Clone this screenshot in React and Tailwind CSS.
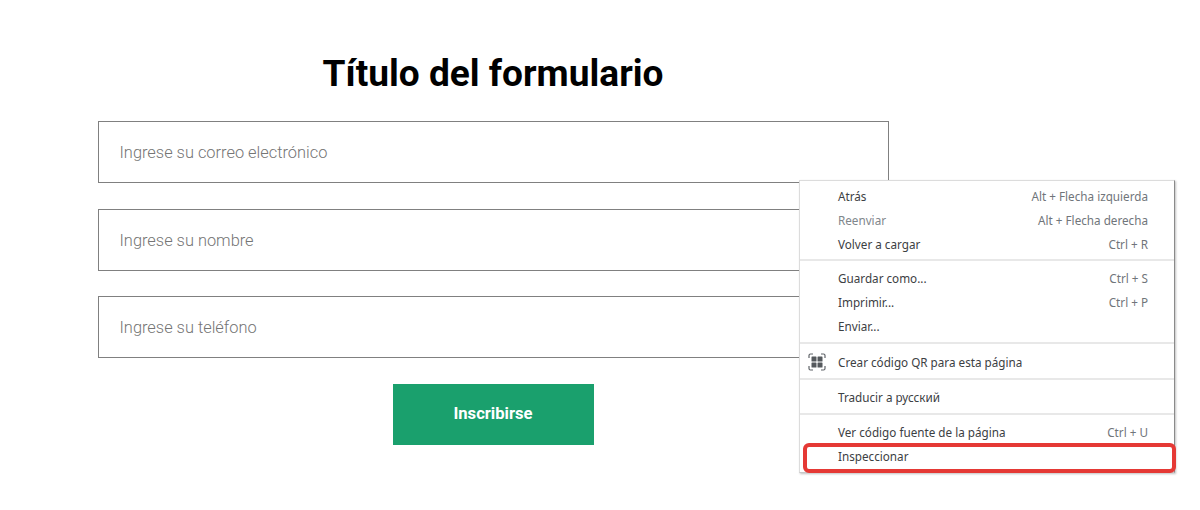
function Field({ label, className = "" }) {
  return (
    <div className={`flex h-[62px] w-[791px] items-center border border-[#808080] bg-white pl-[21px] font-['Roboto',sans-serif] text-[16.4px] font-light text-[#757575] ${className}`}>
      <span className="translate-y-[1px]">{label}</span>
    </div>
  );
}

function Row({ label, hint, muted, icon }) {
  return (
    <div className={`relative flex h-6 items-center justify-between pl-[38px] pr-[26px] ${muted ? "text-[#80868b]" : "text-[#3c4043]"}`}>
      {icon && <div className="absolute left-[8px] top-[2px]">{icon}</div>}
      <span>{label}</span>
      {hint && <span className="text-[#70757a]">{hint}</span>}
    </div>
  );
}

function Sep({ className }) {
  return <div className={`h-[2px] bg-[#e8e8e8] ${className}`} />;
}

function QrIcon() {
  return (
    <svg width="18" height="18" viewBox="0 0 18 18" fill="none">
      <path d="M1 5V2.5A1.500 1.500 0 0 1 2.500 1H5M13 1h2.500A1.500 1.500 0 0 1 17 2.500V5M17 13v2.500a1.500 1.500 0 0 1-1.500 1.500H13M5 17H2.500A1.500 1.500 0 0 1 1 15.500V13" stroke="#5f6368" strokeWidth="1.200" />
      <rect x="3.500" y="3.500" width="5" height="5" rx="0.600" fill="#55595d" />
      <rect x="9.500" y="3.500" width="5" height="5" rx="0.600" fill="#55595d" />
      <rect x="3.500" y="9.500" width="5" height="5" rx="0.600" fill="#55595d" />
      <rect x="9.500" y="9.500" width="5" height="5" rx="0.600" fill="#55595d" />
    </svg>
  );
}

export default function App() {
  return (
    <div className="relative h-[510px] w-[1200px] overflow-hidden bg-white">
      <div className="flex w-[986px] flex-col items-center pt-[50px]">
        <h1 className="mb-[24px] h-[47px] font-['Roboto',sans-serif] text-[37.1px] font-bold leading-[47px] text-black">
          Título del formulario
        </h1>
        <div className="flex flex-col">
          <Field label="Ingrese su correo electrónico" />
          <Field label="Ingrese su nombre" className="mt-[26px]" />
          <Field label="Ingrese su teléfono" className="mt-[25px]" />
        </div>
        <button className="mt-[26px] flex h-[61px] w-[201px] items-center justify-center bg-[#1aa06d] font-['Roboto',sans-serif] text-[16.6px] font-bold text-white">
          Inscribirse
        </button>
      </div>

      <div className="absolute left-[799px] top-[180px] h-[293px] w-[376px] border border-[#dcdcdc] border-r-[#8a8a8a] border-b-[#c8c8c8] bg-white pt-[4px] font-['Noto_Sans',sans-serif] text-[11.7px] shadow-[1px_1px_2px_rgba(0,0,0,0.25)]">
        <Row label="Atrás" hint="Alt + Flecha izquierda" />
        <Row label="Reenviar" hint="Alt + Flecha derecha" muted />
        <Row label="Volver a cargar" hint="Ctrl + R" />
        <Sep className="mb-[6px] mt-[2px]" />
        <Row label="Guardar como..." hint="Ctrl + S" />
        <Row label="Imprimir..." hint="Ctrl + P" />
        <Row label="Enviar..." />
        <Sep className="mb-[7px] mt-[3px]" />
        <Row label="Crear código QR para esta página" icon={<QrIcon />} />
        <Sep className="mb-[6px] mt-[3px]" />
        <Row label="Traducir a русский" />
        <Sep className="mb-[6px] mt-[3px]" />
        <Row label="Ver código fuente de la página" hint="Ctrl + U" />
        <Row label="Inspeccionar" />
      </div>

      <div className="absolute left-[803px] top-[443px] h-[30px] w-[373px] rounded-[6px] border-4 border-[#e53935]" />
    </div>
  );
}
